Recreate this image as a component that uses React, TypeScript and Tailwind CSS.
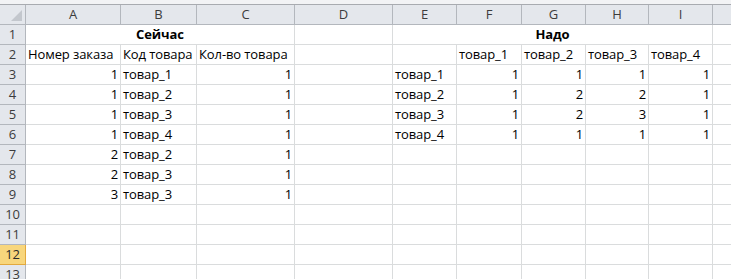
const cols = [
  { key: "A", w: "w-[95px]" },
  { key: "B", w: "w-[76px]" },
  { key: "C", w: "w-[98px]" },
  { key: "D", w: "w-[98px]" },
  { key: "E", w: "w-[64px]" },
  { key: "F", w: "w-[65px]" },
  { key: "G", w: "w-[64px]" },
  { key: "H", w: "w-[63px]" },
  { key: "I", w: "w-[64px]" },
  { key: "J", w: "w-[64px]" },
];

type Cell = { v: string; right?: boolean };

const n = (v: string): Cell => ({ v, right: true });
const t = (v: string): Cell => ({ v });

// rows 3..9, columns A..I
const body: Record<number, (Cell | null)[]> = {
  3: [n("1"), t("товар_1"), n("1"), null, t("товар_1"), n("1"), n("1"), n("1"), n("1")],
  4: [n("1"), t("товар_2"), n("1"), null, t("товар_2"), n("1"), n("2"), n("2"), n("1")],
  5: [n("1"), t("товар_3"), n("1"), null, t("товар_3"), n("1"), n("2"), n("3"), n("1")],
  6: [n("1"), t("товар_4"), n("1"), null, t("товар_4"), n("1"), n("1"), n("1"), n("1")],
  7: [n("2"), t("товар_2"), n("1")],
  8: [n("2"), t("товар_3"), n("1")],
  9: [n("3"), t("товар_3"), n("1")],
};

const row2: (Cell | null)[] = [
  t("Номер заказа"), t("Код товара"), t("Кол-во товара"), null, null,
  t("товар_1"), t("товар_2"), t("товар_3"), t("товар_4"),
];

const RowHead = ({ n, active }: { n: number; active?: boolean }) => (
  <div
    className={`w-[26px] shrink-0 h-full flex items-center justify-center border-r border-b text-[13px] ${
      active
        ? "bg-[#f8d67c] border-[#e2a93e] text-[#2b2b2b]"
        : "bg-[#e4e7ec] border-[#b3b7bd] text-[#3c3c3c]"
    }`}
  >
    {n}
  </div>
);

const GridRow = ({ n, cells, active }: { n: number; cells: (Cell | null)[]; active?: boolean }) => (
  <div className="flex h-[20px]">
    <RowHead n={n} active={active} />
    {cols.map((c, i) => {
      const cell = cells[i];
      return (
        <div
          key={c.key}
          className={`${c.w} shrink-0 h-full border-r border-b border-[#dadcdd] px-[2px] flex items-center whitespace-nowrap ${
            cell?.right ? "justify-end" : "justify-start"
          }`}
        >
          {cell?.v}
        </div>
      );
    })}
  </div>
);

export default function App() {
  return (
    <div className="w-[731px] h-[279px] overflow-hidden bg-white text-[13px] tracking-[-0.1px] text-black font-['Open_Sans','Noto_Sans',sans-serif] leading-none">
      <div className="h-[4px] bg-[#f2f3f5] border-b border-[#a8abb0] box-content" />
      {/* column letters */}
      <div className="flex h-[20px]">
        <div className="w-[26px] shrink-0 h-full bg-[#e4e7ec] border-r border-b border-[#b3b7bd] relative">
          <svg className="absolute right-[3px] bottom-[3px]" width="11" height="11" viewBox="0 0 11 11">
            <path d="M11 0 L11 11 L0 11 Z" fill="#c3c7cd" />
          </svg>
        </div>
        {cols.map((c) => (
          <div
            key={c.key}
            className={`${c.w} shrink-0 h-full bg-[#e4e7ec] border-r border-b border-[#b3b7bd] flex items-center justify-center text-[#3c3c3c] text-[13px]`}
          >
            {c.key}
          </div>
        ))}
      </div>

      {/* row 1: merged titles */}
      <div className="flex h-[20px]">
        <RowHead n={1} />
        <div className="w-[269px] shrink-0 h-full border-r border-b border-[#dadcdd] flex items-center justify-center font-bold">
          Сейчас
        </div>
        <div className="w-[98px] shrink-0 h-full border-r border-b border-[#dadcdd]" />
        <div className="w-[320px] shrink-0 h-full border-r border-b border-[#dadcdd] flex items-center justify-center font-bold">
          Надо
        </div>
        <div className="w-[64px] shrink-0 h-full border-r border-b border-[#dadcdd]" />
      </div>

      <GridRow n={2} cells={row2} />
      {[3, 4, 5, 6, 7, 8, 9].map((r) => (
        <GridRow key={r} n={r} cells={body[r]} />
      ))}
      {[10, 11, 12, 13].map((r) => (
        <GridRow key={r} n={r} cells={[]} active={r === 12} />
      ))}
    </div>
  );
}
